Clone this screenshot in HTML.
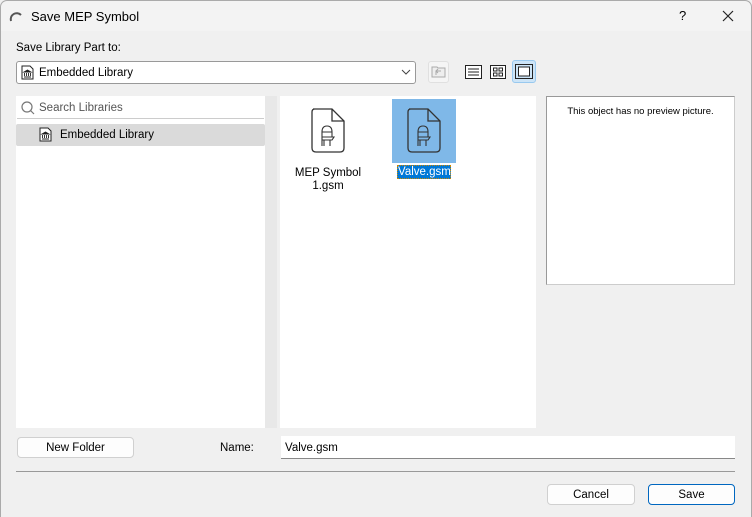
<!DOCTYPE html>
<html><head><style>
*{box-sizing:border-box;margin:0;padding:0}
body{width:752px;height:517px;background:#f0f0f0;font-family:"Liberation Sans",sans-serif;font-size:12px;color:#000;position:relative;overflow:hidden}
.a{position:absolute}
.title{left:0;top:0;width:752px;height:31px;background:#f3f3f3;border:1px solid #aaa;border-bottom:none;border-radius:7px 7px 0 0}
.btn{background:#fdfdfd;border:1px solid #d0d0d0;border-radius:4px;text-align:center;line-height:20px;font-size:11.5px}
.white{background:#fff}
</style></head><body>
<div class="a title"></div>
<svg class="a" style="left:9px;top:9px" width="14" height="14"><path d="M2 12 A6 6 0 0 1 12 6" stroke="#555" stroke-width="2" fill="none"/></svg>
<div class="a" style="left:31px;top:9px;font-size:13px">Save MEP Symbol</div>
<div class="a" style="left:679px;top:8px;font-size:13px">?</div>
<svg class="a" style="left:722px;top:10px" width="12" height="12"><path d="M1 1L11 11M11 1L1 11" stroke="#222" stroke-width="1.2"/></svg>

<div class="a" style="left:16px;top:42px;font-size:11.5px">Save Library Part to:</div>
<div class="a white" style="left:16px;top:61px;width:400px;height:23px;border:1px solid #999;border-radius:3px"></div>
<svg class="a" style="left:21px;top:65px" width="13" height="15"><path d="M1 1H9L12 4V14H1Z" fill="#fff" stroke="#222"/><path d="M3 7L6.5 5L10 7ZM3.5 8V11M5.5 8V11M7.5 8V11M9.5 8V11M3 12H10" stroke="#222" fill="#222" stroke-width="0.9"/></svg>
<div class="a" style="left:39px;top:67px;font-size:11.5px">Embedded Library</div>
<svg class="a" style="left:401px;top:69px" width="10" height="6"><path d="M1 1L5 5L9 1" stroke="#444" fill="none"/></svg>
<div class="a" style="left:428px;top:61px;width:21px;height:22px;background:#f5f5f5;border:1px solid #e0e0e0;border-radius:3px"></div>
<svg class="a" style="left:431px;top:65px" width="15" height="13"><path d="M1 2H6L7 3H14V12H1Z" fill="#eee" stroke="#aaa"/><path d="M5 10V6H10M7 4L5 6L7 8" stroke="#aaa" fill="none"/></svg>
<svg class="a" style="left:465px;top:65px" width="17" height="14"><rect x="0.5" y="0.5" width="16" height="13" fill="#fff" stroke="#222"/><path d="M3 4H14M3 7H14M3 10H14" stroke="#222"/></svg>
<svg class="a" style="left:490px;top:65px" width="16" height="14"><rect x="0.5" y="0.5" width="15" height="13" fill="#fff" stroke="#222"/><rect x="3.5" y="3" width="3.5" height="3" fill="none" stroke="#222"/><rect x="9" y="3" width="3.5" height="3" fill="none" stroke="#222"/><rect x="3.5" y="8" width="3.5" height="3" fill="none" stroke="#222"/><rect x="9" y="8" width="3.5" height="3" fill="none" stroke="#222"/></svg>
<div class="a" style="left:512px;top:60px;width:24px;height:23px;background:#cce4f7;border:1px solid #99c9ef;border-radius:3px"></div>
<svg class="a" style="left:515px;top:64px" width="18" height="15"><rect x="0.5" y="0.5" width="17" height="14" fill="none" stroke="#222"/><rect x="3.5" y="3" width="11" height="9" fill="#fff" stroke="#222"/></svg>

<div class="a white" style="left:16px;top:96px;width:249px;height:332px"></div>
<div class="a" style="left:265px;top:96px;width:12px;height:332px;background:#e8e8e8"></div>
<div class="a white" style="left:17px;top:97px;width:247px;height:22px;border-bottom:1px solid #ccc"></div>
<svg class="a" style="left:20px;top:100px" width="16" height="16"><circle cx="7" cy="7" r="5" fill="none" stroke="#777" stroke-width="1.2"/><path d="M10.5 10.5L14 14" stroke="#777" stroke-width="1.2"/></svg>
<div class="a" style="left:39px;top:102px;font-size:11.5px;color:#555">Search Libraries</div>
<div class="a" style="left:16px;top:124px;width:249px;height:22px;background:#dadada;border-radius:2px"></div>
<svg class="a" style="left:39px;top:127px" width="13" height="15"><path d="M1 1H9L12 4V14H1Z" fill="#fff" stroke="#222"/><path d="M3 7L6.5 5L10 7ZM3.5 8V11M5.5 8V11M7.5 8V11M9.5 8V11M3 12H10" stroke="#222" fill="#222" stroke-width="0.9"/></svg>
<div class="a" style="left:60px;top:129px;font-size:11.5px">Embedded Library</div>

<div class="a white" style="left:280px;top:96px;width:256px;height:332px"></div>
<svg class="a" style="left:310px;top:108px" width="36" height="46"><path d="M3 1H22L34 13V40Q34 44 30 44H6Q2 44 2 40V4Q2 1 5 1Z" fill="none" stroke="#333" stroke-width="1.3"/><path d="M22 1V13H34" fill="none" stroke="#333" stroke-width="1.3"/><path d="M12 38V24Q12 18 17 18Q22 18 22 24V29M12 29H24L22 32H12M14 32V38M20 32V38M12 24H22" fill="none" stroke="#333" stroke-width="1.1"/></svg>
<div class="a" style="left:288px;top:167px;width:80px;text-align:center;font-size:11.5px;line-height:13px">MEP Symbol<br>1.gsm</div>
<div class="a" style="left:392px;top:99px;width:64px;height:64px;background:#7fb8e8"></div>
<svg class="a" style="left:406px;top:108px" width="36" height="46"><path d="M3 1H22L34 13V40Q34 44 30 44H6Q2 44 2 40V4Q2 1 5 1Z" fill="none" stroke="#333" stroke-width="1.3"/><path d="M22 1V13H34" fill="none" stroke="#333" stroke-width="1.3"/><path d="M12 38V24Q12 18 17 18Q22 18 22 24V29M12 29H24L22 32H12M14 32V38M20 32V38M12 24H22" fill="none" stroke="#333" stroke-width="1.1"/></svg>
<div class="a" style="left:397px;top:165px;width:54px;height:14px;background:#0078d7;color:#fff;border:1px dotted #c80;text-align:center;font-size:11.5px;line-height:13px">Valve.gsm</div>

<div class="a white" style="left:546px;top:96px;width:189px;height:189px;border:1px solid #999;border-right-color:#ccc;border-bottom-color:#ccc"></div>
<div class="a" style="left:546px;top:106px;width:189px;text-align:center;font-size:9.5px">This object has no preview picture.</div>

<div class="a btn" style="left:17px;top:437px;width:117px;height:21px">New Folder</div>
<div class="a" style="left:220px;top:442px;font-size:11.5px">Name:</div>
<div class="a white" style="left:281px;top:436px;width:454px;height:23px;border-bottom:1px solid #888"></div>
<div class="a" style="left:285px;top:442px;font-size:11.5px">Valve.gsm</div>
<div class="a" style="left:16px;top:471px;width:719px;height:1px;background:#999"></div>
<div class="a btn" style="left:547px;top:484px;width:88px;height:21px">Cancel</div>
<div class="a btn" style="left:648px;top:484px;width:87px;height:21px;border-color:#0067c0">Save</div>
<div class="a" style="left:0;top:31px;width:1px;height:486px;background:#aaa"></div>
<div class="a" style="left:751px;top:31px;width:1px;height:486px;background:#aaa"></div>
</body></html>
